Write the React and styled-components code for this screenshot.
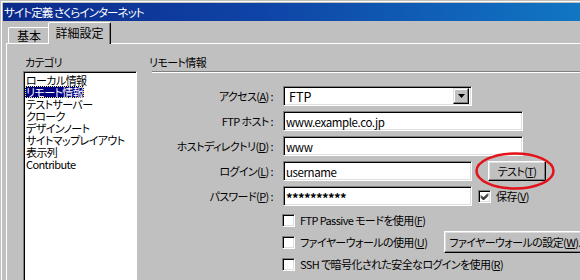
import styled, { createGlobalStyle } from "styled-components"

const categorias = [
    "ローカル情報",
    "リモート情報",
    "テストサーバー",
    "クローク",
    "デザインノート",
    "サイトマップレイアウト",
    "表示列",
    "Contribute",
]

function Checkbox({ checked }) {
    return (
        <SpanCheckbox>
            {checked && (
                <svg width="9" height="9" viewBox="0 0 9 9">
                    <path d="M1 3.5 L3.5 6 L8 1.5 M1 4.5 L3.5 7 L8 2.5 M1 5.5 L3.5 8 L8 3.5" stroke="#000" strokeWidth="1" fill="none" />
                </svg>
            )}
        </SpanCheckbox>
    )
}

function App() {

    return (
        <>
            <GlobalStyle />
            <DivWindow>
                <DivFrame>
                    <DivTitleBar>サイト定義 さくらインターネット</DivTitleBar>
                    <DivBody>
                        <DivTabRow>
                            <DivTab>基本</DivTab>
                            <DivTab $active>詳細設定</DivTab>
                        </DivTabRow>
                        <DivTabPanel>
                            <DivCategoryColumn>
                                <SpanSectionLabel>カテゴリ</SpanSectionLabel>
                                <UlListBox>
                                    {categorias.map((categoria, i) => (
                                        <LiListItem key={categoria}>
                                            <SpanItemText $selected={i === 1}>{categoria}</SpanItemText>
                                        </LiListItem>
                                    ))}
                                </UlListBox>
                            </DivCategoryColumn>

                            <DivSettingsColumn>
                                <SpanSectionLabel>リモート情報</SpanSectionLabel>
                                <HrEtched />

                                <DivFormGrid>
                                    <LabelField>アクセス(<U>A</U>) :</LabelField>
                                    <DivFieldRow>
                                        <DivSelect $w={189}>
                                            <span>FTP</span>
                                            <DivDropButton>
                                                <svg width="7" height="4" viewBox="0 0 7 4">
                                                    <path d="M0 0 H7 L3.5 4 Z" fill="#000" />
                                                </svg>
                                            </DivDropButton>
                                        </DivSelect>
                                    </DivFieldRow>

                                    <LabelField>FTP ホスト :</LabelField>
                                    <DivFieldRow>
                                        <InputText $w={240} readOnly value="www.example.co.jp" />
                                    </DivFieldRow>

                                    <LabelField>ホストディレクトリ(<U>D</U>) :</LabelField>
                                    <DivFieldRow>
                                        <InputText $w={240} readOnly value="www" />
                                    </DivFieldRow>

                                    <LabelField>ログイン(<U>L</U>) :</LabelField>
                                    <DivFieldRow>
                                        <InputText $w={189} readOnly value="username" />
                                        <DivTestWrap>
                                            <ButtonClassic $w={58} $h={20}>テスト(<U>T</U>)</ButtonClassic>
                                            <SvgMarker width="82" height="40" viewBox="0 0 82 40">
                                                <ellipse cx="41" cy="20" rx="38.5" ry="17.5" fill="none" stroke="#e3121b" strokeWidth="2.5" />
                                            </SvgMarker>
                                        </DivTestWrap>
                                    </DivFieldRow>

                                    <LabelField>パスワード(<U>P</U>) :</LabelField>
                                    <DivFieldRow>
                                        <InputText $w={189} $masked readOnly value="**********" />
                                        <DivSaveOption>
                                            <Checkbox checked />
                                            <span>保存(<U>V</U>)</span>
                                        </DivSaveOption>
                                    </DivFieldRow>
                                </DivFormGrid>

                                <DivOptionList>
                                    <DivOption>
                                        <Checkbox />
                                        <span>FTP Passive モードを使用(<U>F</U>)</span>
                                    </DivOption>
                                    <DivOption>
                                        <Checkbox />
                                        <span>ファイヤーウォールの使用(<U>U</U>)</span>
                                        <ButtonClassic $h={22} $ml={12}>ファイヤーウォールの設定(<U>W</U>)...</ButtonClassic>
                                    </DivOption>
                                    <DivOption>
                                        <Checkbox />
                                        <span>SSH で暗号化された安全なログインを使用(<U>R</U>)</span>
                                    </DivOption>
                                </DivOptionList>
                            </DivSettingsColumn>
                        </DivTabPanel>
                    </DivBody>
                </DivFrame>
            </DivWindow>
        </>
    )

}

const GlobalStyle = createGlobalStyle`
    html, body {
        margin: 0;
        background: #c0c0c0;
        overflow: hidden;
    }
    body {
        font-family: "Noto Sans CJK JP", "Liberation Sans", sans-serif;
        font-size: 11px;
        letter-spacing: -0.6px;
        font-feature-settings: "palt";
        color: #000;
    }
`

const DivWindow = styled.div`
    width: 580px;
    height: 280px;
    box-sizing: border-box;
    padding: 1px 0 0 1px;
    overflow: hidden;
`

const DivFrame = styled.div`
    height: 100%;
    box-sizing: border-box;
    border-top: 1px solid #fff;
    border-left: 1px solid #fff;
    padding: 1px 0 0 1px;
    display: flex;
    flex-direction: column;
`

const DivTitleBar = styled.div`
    height: 18px;
    line-height: 18px;
    padding-left: 1px;
    color: #fff;
    font-size: 11.5px;
    letter-spacing: -0.9px;
    white-space: nowrap;
    background: linear-gradient(90deg, #0b2a8c 0%, #0f44a6 45%, #1176c4 100%);
`

const DivBody = styled.div`
    flex: 1;
    display: flex;
    flex-direction: column;
    padding-left: 3px;
`

const DivTabRow = styled.div`
    height: 22px;
    display: flex;
    align-items: flex-end;
    padding-left: 2px;
`

const DivTab = styled.div`
    position: relative;
    z-index: ${p => (p.$active ? 1 : 0)};
    box-sizing: border-box;
    width: ${p => (p.$active ? 63 : 42)}px;
    height: ${p => (p.$active ? 22 : 16)}px;
    margin-left: ${p => (p.$active ? -2 : 0)}px;
    margin-bottom: ${p => (p.$active ? -1 : 0)}px;
    background: #c0c0c0;
    border-top: 1px solid #fff;
    border-left: 1px solid #fff;
    border-right: 1px solid #000;
    border-radius: 2px 2px 0 0;
    box-shadow: inset -1px 0 0 #808080;
    display: flex;
    align-items: center;
    justify-content: center;
    padding-bottom: ${p => (p.$active ? 2 : 0)}px;
    font-size: 12px;
    letter-spacing: 0;
`

const DivTabPanel = styled.div`
    flex: 1;
    display: flex;
    gap: 10px;
    border-top: 1px solid #fff;
    border-left: 1px solid #fff;
    padding: 11px 0 0 16px;
`

const DivCategoryColumn = styled.div`
    width: 114px;
    flex-shrink: 0;
    display: flex;
    flex-direction: column;
    gap: 2px;
`

const SpanSectionLabel = styled.span`
    height: 14px;
    line-height: 14px;
    padding-left: 2px;
`

const UlListBox = styled.ul`
    margin: 0;
    padding: 0;
    list-style: none;
    height: 230px;
    background: #fff;
    border-top: 1px solid #808080;
    border-left: 1px solid #808080;
    border-right: 1px solid #fff;
    box-shadow: inset 1px 1px 0 #000;
    padding: 2px 0 0 1px;
`

const LiListItem = styled.li`
    height: 12px;
    line-height: 12px;
    white-space: nowrap;
`

const SpanItemText = styled.span`
    display: inline-block;
    height: 12px;
    padding: 0 1px;
    background: ${p => (p.$selected ? "#000080" : "transparent")};
    color: ${p => (p.$selected ? "#fff" : "#000")};
    outline: ${p => (p.$selected ? "1px dotted #f0f080" : "none")};
    outline-offset: -1px;
`

const DivSettingsColumn = styled.div`
    flex: 1;
    display: flex;
    flex-direction: column;
    min-width: 0;
`

const HrEtched = styled.hr`
    margin: 2px 0 0 5px;
    height: 0;
    border: none;
    border-top: 1px solid #808080;
    border-bottom: 1px solid #fff;
`

const DivFormGrid = styled.div`
    display: grid;
    grid-template-columns: 130px auto;
    column-gap: 6px;
    row-gap: 5px;
    margin-top: 13px;
`

const LabelField = styled.label`
    height: 20px;
    line-height: 20px;
    text-align: right;
    padding-right: 4px;
    white-space: nowrap;
`

const U = styled.u`
    text-underline-offset: 1px;
`

const DivFieldRow = styled.div`
    display: flex;
    align-items: center;
    height: 20px;
`

const sunken = `
    box-sizing: border-box;
    background: #fff;
    border-top: 1px solid #808080;
    border-left: 1px solid #808080;
    border-right: 1px solid #fff;
    border-bottom: 1px solid #fff;
    box-shadow: inset 1px 1px 0 #000, inset -1px -1px 0 #dfdfdf;
`

const InputText = styled.input`
    ${sunken}
    width: ${p => p.$w}px;
    height: 20px;
    margin: 0;
    padding: ${p => (p.$masked ? "3px 2px 0" : "1px 2px 0")};
    font: inherit;
    font-size: ${p => (p.$masked ? 13 : 11.5)}px;
    letter-spacing: ${p => (p.$masked ? -0.6 : -0.4)}px;
    font-weight: ${p => (p.$masked ? 700 : 400)};
    font-feature-settings: "palt";
    color: #000;
    outline: none;
`

const DivSelect = styled.div`
    ${sunken}
    width: ${p => p.$w}px;
    height: 20px;
    display: flex;
    align-items: center;
    justify-content: space-between;
    padding: 0 2px 0 5px;
    font-size: 12.5px;
    letter-spacing: 0;
`

const DivDropButton = styled.div`
    width: 16px;
    height: 16px;
    box-sizing: border-box;
    background: #c0c0c0;
    border-top: 1px solid #dfdfdf;
    border-left: 1px solid #dfdfdf;
    border-right: 1px solid #000;
    border-bottom: 1px solid #000;
    box-shadow: inset -1px -1px 0 #808080, inset 1px 1px 0 #fff;
    display: flex;
    align-items: center;
    justify-content: center;
`

const ButtonClassic = styled.button`
    box-sizing: border-box;
    ${p => (p.$w ? `width: ${p.$w}px;` : "")}
    height: ${p => p.$h}px;
    margin: 0 0 0 ${p => p.$ml || 0}px;
    padding: 0 4px;
    flex-shrink: 0;
    white-space: nowrap;
    font: inherit;
    letter-spacing: -0.6px;
    font-feature-settings: "palt";
    color: #000;
    background: #c0c0c0;
    border-top: 1px solid #fff;
    border-left: 1px solid #fff;
    border-right: 1px solid #000;
    border-bottom: 1px solid #000;
    box-shadow: inset -1px -1px 0 #808080, inset 1px 1px 0 #dfdfdf;
`

const DivTestWrap = styled.div`
    position: relative;
    margin-left: 16px;
    display: flex;
`

const SvgMarker = styled.svg`
    position: absolute;
    left: -14px;
    top: -10px;
    pointer-events: none;
`

const SpanCheckbox = styled.span`
    ${sunken}
    width: 13px;
    height: 13px;
    flex-shrink: 0;
    display: flex;
    align-items: center;
    justify-content: center;
`

const DivSaveOption = styled.div`
    display: flex;
    align-items: center;
    gap: 5px;
    margin-left: 6px;
`

const DivOptionList = styled.div`
    display: flex;
    flex-direction: column;
    margin: 3px 0 0 135px;
`

const DivOption = styled.div`
    height: 22px;
    display: flex;
    align-items: center;
    gap: 5px;
    white-space: nowrap;
`

export default App
